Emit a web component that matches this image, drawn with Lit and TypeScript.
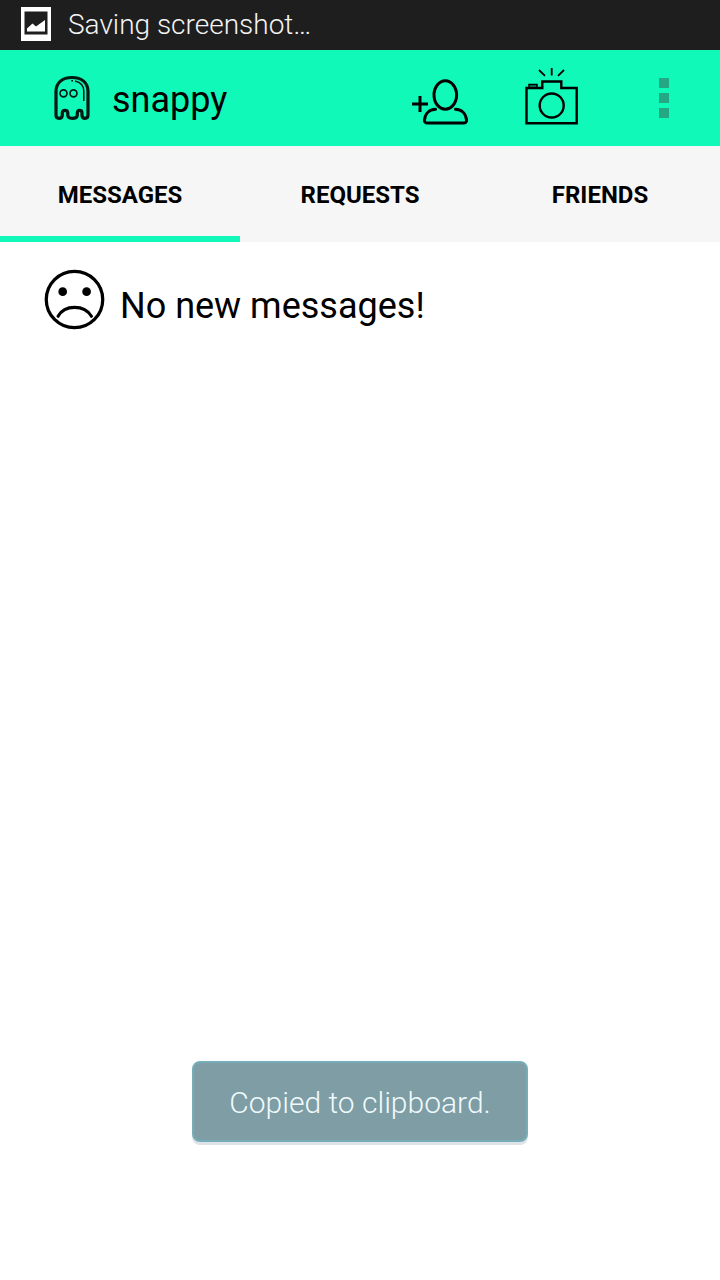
import { LitElement, html, css, svg } from "lit";
import { customElement, state } from "lit/decorators.js";

const pictureIcon = svg`<svg class="picture" viewBox="0 0 30 34" aria-hidden="true">
  <rect width="30" height="34" fill="#fff"/>
  <rect x="3.5" y="4.5" width="23" height="23" fill="#1e1e1e"/>
  <path d="M6 24.5V21.5L11.5 16.5L15 19.5L24 13V24.5Z" fill="#fff"/>
</svg>`;

const ghostIcon = svg`<svg class="ghost" viewBox="0 0 40 48" fill="none" stroke="#001a12" aria-hidden="true">
  <path stroke-width="3.2" stroke-linejoin="round" d="M4 17.5C4 8.500 10.500 3.500 20 3.500S36 8.500 36 17.500V41Q36 44.300 33 44.300Q30.300 44.300 30 41.500V39Q30 36.300 27.700 36.300Q25.500 36.300 25.300 39V41.500Q25 44.300 20.300 44.300Q16 44.300 15.800 41.500V39Q15.600 36.300 13 36.300Q10.500 36.300 10.300 39V41.500Q10 44.300 7 44.300Q4 44.300 4 41Z"/>
  <circle cx="11.500" cy="19.300" r="3.500" stroke-width="1.700"/>
  <circle cx="21.500" cy="19.300" r="3.500" stroke-width="1.700"/>
  <path stroke-width="1.500" d="M19.300 6.700H21M23 6.900C29 8.300 31.800 11.800 31.800 17V27"/>
</svg>`;

const addPersonIcon = svg`<svg viewBox="0 0 80 80" fill="none" stroke="#000" stroke-width="3" aria-hidden="true">
  <path d="M12 46H28M20 38V54"/>
  <ellipse cx="45.300" cy="37" rx="11.300" ry="14.200"/>
  <path stroke-linecap="round" stroke-linejoin="round" d="M35.500 51.300C29 51.500 25 56 24.500 62Q24.300 65 27.500 65H63.500Q66.700 65 66.500 62C66 56 62 51.500 55.500 51.300"/>
</svg>`;

const cameraIcon = svg`<svg viewBox="2 0 80 80" fill="none" stroke="#000" stroke-width="2.400" aria-hidden="true">
  <path d="M16.500 30H32.300V23.500H51.300V30H66.700V65.300H16.500Z"/>
  <path fill="#0b8a68" stroke-width="1.500" d="M19 29.500V26.500H27V29.500Z"/>
  <circle cx="41.700" cy="47.500" r="12"/>
  <path stroke-width="1.800" d="M29 12L35 17.800M41.700 10V17.500M54 12L48 17.800"/>
</svg>`;

const overflowIcon = svg`<svg viewBox="0 0 80 80" fill="#23a883" aria-hidden="true">
  <path d="M35 20H45V30H35ZM35 35H45V45H35ZM35 50H45V60H35Z"/>
</svg>`;

const sadIcon = svg`<svg class="sad" viewBox="0 0 62 62" fill="none" stroke="#000" aria-hidden="true">
  <circle cx="31" cy="31" r="28.700" stroke-width="3.300"/>
  <circle cx="19" cy="23" r="4.400" fill="#000" stroke="none"/>
  <circle cx="43.300" cy="23" r="4.400" fill="#000" stroke="none"/>
  <path stroke-width="3.200" stroke-linecap="round" d="M14.300 48C21 36 41 36 48.200 48"/>
</svg>`;

@customElement("app-root")
export class AppRoot extends LitElement {
  static styles = css`
    :host {
      display: flex;
      flex-direction: column;
      min-height: 100vh;
      background: #fff;
      color: #000;
      font-family: Roboto, sans-serif;
    }
    svg { display: block; }
    .status {
      display: flex;
      align-items: center;
      gap: 17px;
      height: 50px;
      padding: 0 21px 2px;
      box-sizing: border-box;
      background: #1e1e1e;
      color: #f4f4f4;
      font-size: 28px;
      font-weight: 300;
    }
    .picture { width: 30px; height: 34px; }
    .bar {
      display: flex;
      align-items: center;
      height: 96px;
      padding-left: 52px;
      background: #11f9b9;
    }
    .ghost { width: 40px; height: 48px; }
    h1 {
      flex: 1;
      margin: 0 0 0 20px;
      padding-top: 4px;
      font-size: 36px;
      line-height: 48px;
      font-weight: 400;
    }
    button {
      margin: 0;
      padding: 0;
      border: 0;
      background: none;
      color: inherit;
      font-family: inherit;
    }
    .action {
      display: grid;
      place-items: center;
      width: 112px;
      height: 96px;
    }
    .action svg { width: 80px; height: 80px; }
    .tabs {
      display: grid;
      grid-template-columns: repeat(3, 1fr);
      background: #f6f6f6;
    }
    .tab {
      height: 96px;
      padding-top: 2px;
      border-top: 6px solid transparent;
      border-bottom: 6px solid transparent;
      font-size: 24px;
      font-weight: 700;
    }
    .tab[aria-selected="true"] { border-bottom-color: #11f9b9; }
    .empty {
      display: flex;
      align-items: center;
      gap: 15px;
      padding: 26px 44px;
    }
    .empty p {
      margin: 0;
      padding-top: 14px;
      font-size: 36px;
      line-height: 48px;
    }
    .sad { width: 61px; height: 61px; }
    .toast {
      align-self: center;
      margin: auto 0 138px;
      padding: 19px 35px 16px;
      border: 2px solid #76adb9;
      border-radius: 8px;
      background: #7e9da4;
      box-shadow: 0 3px 0 #dde3e6;
      color: #f0fafd;
      font-size: 30px;
      line-height: 42px;
      font-weight: 300;
    }
  `;

  @state() private selected = 0;

  private tabs = ["MESSAGES", "REQUESTS", "FRIENDS"];

  render() {
    return html`
      <div class="status">${pictureIcon}<span>Saving screenshot…</span></div>
      <header class="bar">
        ${ghostIcon}
        <h1>snappy</h1>
        <button class="action" aria-label="Add friend">${addPersonIcon}</button>
        <button class="action" aria-label="Camera">${cameraIcon}</button>
        <button class="action" aria-label="More options">${overflowIcon}</button>
      </header>
      <nav class="tabs" role="tablist">
        ${this.tabs.map(
          (label, i) => html`<button
            class="tab"
            role="tab"
            aria-selected=${this.selected === i ? "true" : "false"}
            @click=${() => (this.selected = i)}
          >${label}</button>`
        )}
      </nav>
      <main class="empty">${sadIcon}<p>No new messages!</p></main>
      <div class="toast" role="status">Copied to clipboard.</div>
    `;
  }
}
